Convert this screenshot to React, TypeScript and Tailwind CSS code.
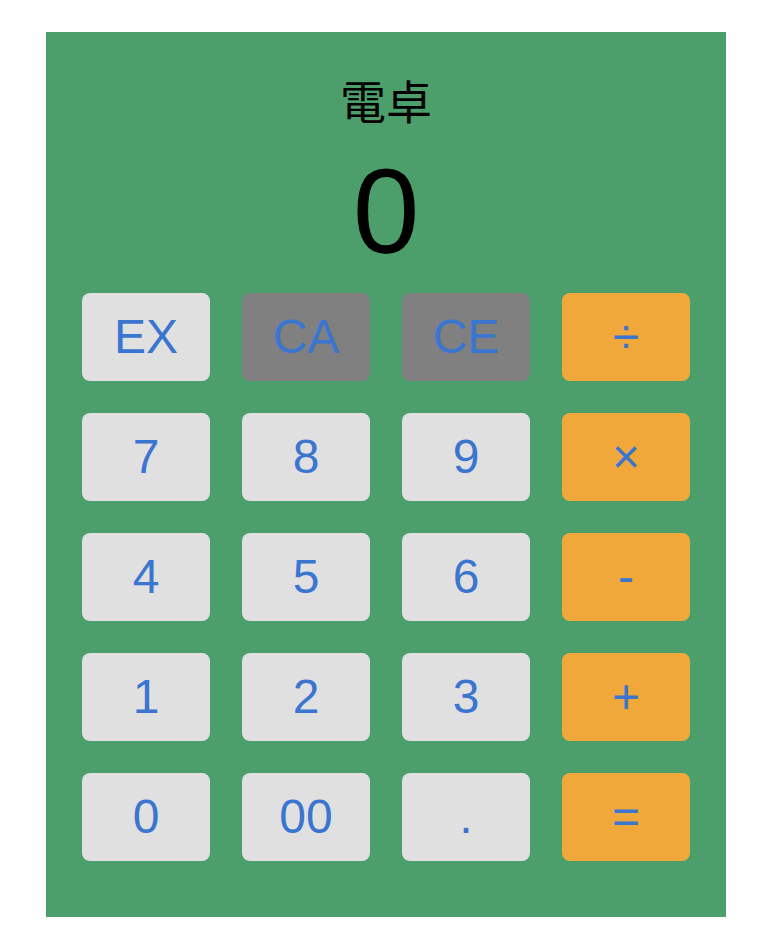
import React from "react";

type Key = { label: string; kind: "num" | "clr" | "op" };

const rows: Key[][] = [
  [
    { label: "EX", kind: "num" },
    { label: "CA", kind: "clr" },
    { label: "CE", kind: "clr" },
    { label: "÷", kind: "op" },
  ],
  [
    { label: "7", kind: "num" },
    { label: "8", kind: "num" },
    { label: "9", kind: "num" },
    { label: "×", kind: "op" },
  ],
  [
    { label: "4", kind: "num" },
    { label: "5", kind: "num" },
    { label: "6", kind: "num" },
    { label: "-", kind: "op" },
  ],
  [
    { label: "1", kind: "num" },
    { label: "2", kind: "num" },
    { label: "3", kind: "num" },
    { label: "+", kind: "op" },
  ],
  [
    { label: "0", kind: "num" },
    { label: "00", kind: "num" },
    { label: ".", kind: "num" },
    { label: "=", kind: "op" },
  ],
];

const bg: Record<Key["kind"], string> = {
  num: "bg-[#e0e0e0]",
  clr: "bg-[#808080]",
  op: "bg-[#f0a83a]",
};

export default function App() {
  return (
    <div className="min-h-[946px] w-[778px] bg-white pt-[32px] font-['Liberation_Sans',Arial,sans-serif]">
      <div className="mx-[46px] w-[680px] bg-[#4c9f6a] px-[36px] pt-[43px] pb-[56px]">
        <div className="text-center text-[46px] leading-[48px] text-black font-['Noto_Sans_CJK_JP','Liberation_Sans',sans-serif]">
          電卓
        </div>
        <div className="mt-[28px] text-center text-[120px] leading-[120px] text-black">
          0
        </div>
        <div className="mt-[22px] grid grid-cols-4 gap-[32px]">
          {rows.flat().map((k, i) => (
            <button
              key={i}
              className={`${bg[k.kind]} flex h-[88px] w-[128px] items-center justify-center rounded-[8px] text-[48px] leading-none text-[#3a75d0]`}
            >
              {k.label}
            </button>
          ))}
        </div>
      </div>
    </div>
  );
}
